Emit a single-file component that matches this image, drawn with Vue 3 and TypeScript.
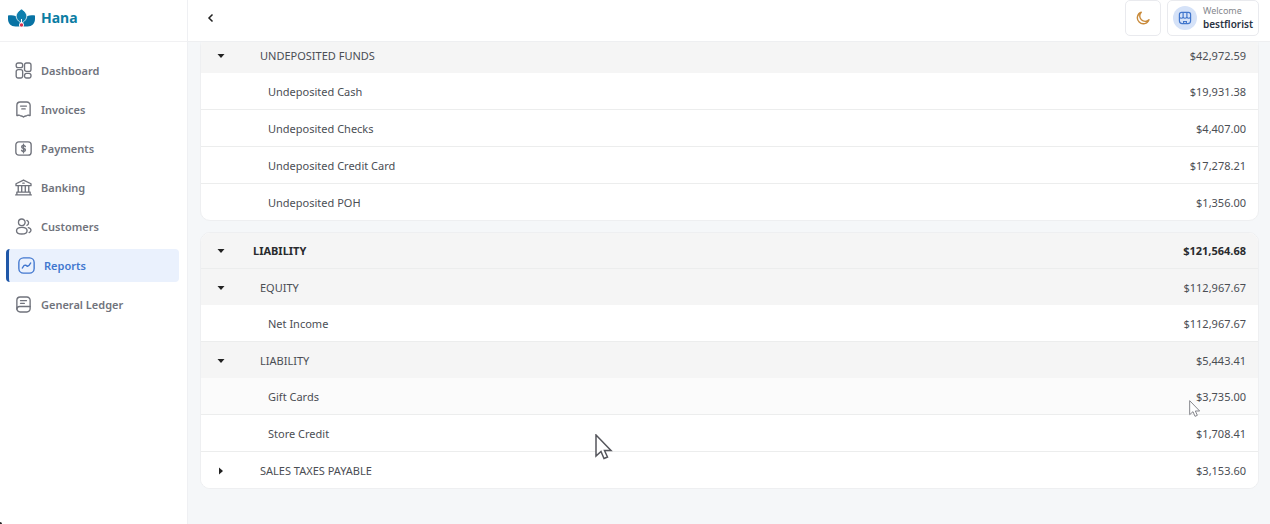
<script setup lang="ts">
type Level = 'section' | 'group' | 'leaf'
interface Row {
  level: Level
  name: string
  amount: string
  open?: boolean
  hover?: boolean
}
interface NavItem {
  label: string
  icon: string[]
  active?: boolean
}

const nav: NavItem[] = [
  {
    label: 'Dashboard',
    icon: [
      'M3.6 1.2h3.2a2.2 2.2 0 0 1 2.200 2.200v1a2.200 2.200 0 0 1-2.200 2.200H3.600a2.200 2.200 0 0 1-2.200-2.200v-1a2.200 2.200 0 0 1 2.200-2.200z',
      'M3.6 9h3.200a2.200 2.200 0 0 1 2.200 2.200v5.400a2.200 2.200 0 0 1-2.200 2.200H3.600a2.200 2.200 0 0 1-2.200-2.200v-5.400A2.200 2.200 0 0 1 3.600 9z',
      'M13.400 1.200h3.200a2.200 2.200 0 0 1 2.200 2.200v5.400a2.200 2.200 0 0 1-2.200 2.200h-3.200a2.200 2.200 0 0 1-2.200-2.200V3.400a2.200 2.200 0 0 1 2.200-2.200z',
      'M13.400 13.400h3.200a2.200 2.200 0 0 1 2.200 2.200v1a2.200 2.200 0 0 1-2.200 2.200h-3.200a2.200 2.200 0 0 1-2.200-2.200v-1a2.200 2.200 0 0 1 2.200-2.200z',
    ],
  },
  {
    label: 'Invoices',
    icon: [
      'M2.200 17V5A3.800 3.800 0 0 1 6 1.200h8A3.800 3.800 0 0 1 17.800 5v12c-1.800 0-2.600-1-3.800 0-1.300 1-2.300.2-4 2-1.700-1.800-2.700-1-4-2-1.200-1-2 0-3.800 0z',
      'M6.500 6h7M8 9.300h4',
    ],
  },
  {
    label: 'Payments',
    icon: [
      'M4.500 2.200h11a3.500 3.500 0 0 1 3.500 3.500v8.600a3.500 3.500 0 0 1-3.500 3.500h-11A3.500 3.500 0 0 1 1 14.300V5.700a3.500 3.500 0 0 1 3.500-3.500z',
      'M12.200 7.800c-.3-.9-1.200-1.300-2.200-1.300-1.300 0-2.200.6-2.200 1.700 0 2.400 4.500 1.200 4.500 3.600 0 1.100-1 1.700-2.300 1.700-1.200 0-2-.5-2.300-1.400M10 5v10',
    ],
  },
  {
    label: 'Banking',
    icon: [
      'M1.200 7.800V5.600L10 1.200l8.800 4.400v2.200z',
      'M3.800 8v7.500M7.900 8v7.500M12.100 8v7.500M16.200 8v7.500M2.500 15.500h15M.8 18.700h18.400M2.200 15.500v3M17.800 15.500v3M9.200 4.900h1.600',
    ],
  },
  {
    label: 'Customers',
    icon: [
      'M8 1.200a3.900 3.900 0 1 1 0 7.800 3.900 3.900 0 0 1 0-7.800z',
      'M8 11c3.600 0 6.200 1.500 6.200 3.900S11.600 18.800 8 18.800s-6.200-1.500-6.200-3.900S4.400 11 8 11z',
      'M14 2.800a3.100 3.100 0 0 1 0 5.800M15.700 11.300c1.900.5 3.100 1.600 3.100 3.100 0 1.300-.8 2.300-2.200 2.800',
    ],
  },
  {
    label: 'Reports',
    active: true,
    icon: [
      'M6.500 1h7A5.500 5.500 0 0 1 19 6.500v7a5.500 5.500 0 0 1-5.500 5.500h-7A5.500 5.500 0 0 1 1 13.500v-7A5.500 5.500 0 0 1 6.500 1z',
      'M5 13l2.200-3.200 1.800-.3 2 1.500 2-1.200L15 7',
    ],
  },
  {
    label: 'General Ledger',
    icon: [
      'M6 1.200h8A3.800 3.800 0 0 1 17.800 5v10a3.800 3.800 0 0 1-3.800 3.800H6A3.800 3.800 0 0 1 2.200 15V5A3.800 3.800 0 0 1 6 1.200z',
      'M2.200 15.500c0-2 1.300-3.200 3.300-3.200h12.300M6.500 5.500h7M6.500 8.600h4.500',
    ],
  },
]

const cards: Row[][] = [
  [
    { level: 'group', name: 'UNDEPOSITED FUNDS', amount: '$42,972.59', open: true },
    { level: 'leaf', name: 'Undeposited Cash', amount: '$19,931.38' },
    { level: 'leaf', name: 'Undeposited Checks', amount: '$4,407.00' },
    { level: 'leaf', name: 'Undeposited Credit Card', amount: '$17,278.21' },
    { level: 'leaf', name: 'Undeposited POH', amount: '$1,356.00' },
  ],
  [
    { level: 'section', name: 'LIABILITY', amount: '$121,564.68', open: true },
    { level: 'group', name: 'EQUITY', amount: '$112,967.67', open: true },
    { level: 'leaf', name: 'Net Income', amount: '$112,967.67' },
    { level: 'group', name: 'LIABILITY', amount: '$5,443.41', open: true },
    { level: 'leaf', name: 'Gift Cards', amount: '$3,735.00', hover: true },
    { level: 'leaf', name: 'Store Credit', amount: '$1,708.41' },
    { level: 'group', name: 'SALES TAXES PAYABLE', amount: '$3,153.60', open: false },
  ],
]
</script>

<template>
  <div class="app">
    <aside class="sidebar">
      <a class="brand" href="#">
        <svg class="logo" viewBox="0 0 54 36" aria-hidden="true">
          <path d="M0 13c9-2 17 0 21 6 3 4 4 9 4 16H15C6 35 0 29 0 20z" fill="#0873a4" />
          <path d="M54 13c-9-2-17 0-21 6-3 4-4 9-4 16h10c9 0 15-6 15-15z" fill="#0873a4" />
          <path d="M27 0C19 5 15 11 17 18c2 5 6 8 10 11 4-3 8-6 10-11 2-7-2-13-10-18z" fill="#0f7fae" stroke="#fff" stroke-width="1.500" />
          <path d="M27 20v9" stroke="#fff" stroke-width="2" />
          <circle cx="27" cy="32" r="5" fill="#fff" />
          <circle cx="27" cy="32" r="3.500" fill="#d9304f" />
        </svg>
        <span>Hana</span>
      </a>
      <nav class="nav">
        <a v-for="item in nav" :key="item.label" href="#" class="nav-item" :class="{ active: item.active }">
          <svg viewBox="0 0 20 20" class="nav-icon" aria-hidden="true">
            <path v-for="d in item.icon" :key="d" :d="d" />
          </svg>
          <span>{{ item.label }}</span>
        </a>
      </nav>
    </aside>

    <div class="page">
      <header class="topbar">
        <button class="back" aria-label="Collapse menu">
          <svg viewBox="0 0 10 10"><path d="M6.500 1.500L3 5l3.500 3.500" /></svg>
        </button>
        <div class="tools">
          <button class="theme" aria-label="Switch theme">
            <svg viewBox="0 0 20 20"><path d="M7.500 1.800A8.500 8.500 0 1 0 18.500 12.500 7 7 0 0 1 7.500 1.800z" /></svg>
          </button>
          <button class="user">
            <span class="avatar">
              <svg viewBox="0 0 20 20">
                <path d="M5 2h10a3 3 0 0 1 3 3v9a4 4 0 0 1-4 4H6a4 4 0 0 1-4-4V5a3 3 0 0 1 3-3z" />
                <path d="M2 8.500c1 2.500 4.300 2.500 5.300 0 1 2.500 4.400 2.500 5.400 0 1 2.500 4.300 2.500 5.300 0M7.300 8.500V2M12.700 8.500V2M8 18v-3h4v3" />
              </svg>
            </span>
            <span class="who"><small>Welcome</small><strong>bestflorist</strong></span>
          </button>
        </div>
      </header>

      <main class="content">
        <div class="scroll">
          <section v-for="(rows, c) in cards" :key="c" class="card">
            <table>
              <tbody>
                <tr v-for="(row, i) in rows" :key="i" :class="[row.level, { closed: row.open === false, hover: row.hover }]">
                  <td class="toggle">
                    <button v-if="row.level !== 'leaf'" :aria-expanded="row.open" :aria-label="row.name">
                      <svg viewBox="0 0 8 8"><path d="M0.500 2h7L4 6z" /></svg>
                    </button>
                  </td>
                  <td class="name">{{ row.name }}</td>
                  <td class="amount">{{ row.amount }}</td>
                </tr>
              </tbody>
            </table>
          </section>
        </div>
      </main>
    </div>

    <svg class="pointer large" viewBox="0 0 18 27" aria-hidden="true">
      <path d="M1 1v21l5-4.500 3 7 3.500-1.500-3-6.500H16z" />
    </svg>
    <svg class="pointer small" viewBox="0 0 18 27" aria-hidden="true">
      <path d="M1 1v21l5-4.500 3 7 3.500-1.500-3-6.500H16z" />
    </svg>
  </div>
</template>

<style>
body {
  margin: 0;
}
</style>

<style scoped>
.app {
  position: relative;
  display: flex;
  height: 100vh;
  overflow: hidden;
  background: #f5f7f9;
  color: #4b4e54;
  font: 11px/18px "Noto Sans", "Open Sans", sans-serif;
}
.app::after {
  content: "";
  position: absolute;
  bottom: 0;
  left: 0;
  width: 2px;
  height: 2px;
  border-top-right-radius: 2px;
  background: #222;
}
button {
  margin: 0;
  padding: 0;
  border: 0;
  background: none;
  color: inherit;
  font: inherit;
}
svg {
  display: block;
  flex: none;
}
.sidebar {
  flex: none;
  width: 187px;
  background: #fff;
  border-right: 1px solid #eff0f3;
}
.brand {
  display: flex;
  align-items: center;
  gap: 6px;
  box-sizing: border-box;
  height: 42px;
  padding: 0 8px 5px;
  border-bottom: 1px solid #f1f1f3;
  color: #0b7da3;
  font-size: 14px;
  font-weight: 700;
  text-decoration: none;
}
.logo {
  width: 27px;
  height: 18px;
}
.nav {
  display: flex;
  flex-direction: column;
  gap: 6px;
  padding: 12px 8px 0 6px;
}
.nav-item {
  display: flex;
  align-items: center;
  gap: 9px;
  height: 33px;
  padding-left: 9px;
  border-radius: 4px;
  color: #70737c;
  font-weight: 600;
  text-decoration: none;
}
.nav-item.active {
  border-left: 3px solid #1f57a8;
  background: #eaf1fd;
  color: #4177cf;
}
.nav-icon {
  width: 17px;
  height: 17px;
  fill: none;
  stroke: currentColor;
  stroke-width: 1.600;
  stroke-linejoin: round;
  stroke-linecap: round;
}
.page {
  display: flex;
  flex: 1;
  flex-direction: column;
  min-width: 0;
}
.topbar {
  display: flex;
  align-items: center;
  justify-content: space-between;
  box-sizing: border-box;
  height: 42px;
  padding: 0 11px 5px 18px;
  background: #fff;
  border-bottom: 1px solid #eeeff1;
}
.back svg {
  width: 10px;
  height: 10px;
  fill: none;
  stroke: #222;
  stroke-width: 1.500;
}
.tools {
  display: flex;
  gap: 6px;
}
.theme,
.user {
  display: flex;
  align-items: center;
  box-sizing: border-box;
  height: 36px;
  border: 1px solid #e9eaee;
  border-radius: 5px;
  background: #fff;
}
.theme {
  justify-content: center;
  width: 36px;
}
.theme svg {
  width: 14px;
  height: 14px;
  fill: none;
  stroke: #c98a3a;
  stroke-width: 2;
  stroke-linejoin: round;
}
.user {
  gap: 6px;
  padding: 0 5px;
}
.avatar {
  display: grid;
  place-items: center;
  width: 24px;
  height: 24px;
  border-radius: 50%;
  background: #d5e2f8;
}
.avatar svg {
  width: 14px;
  height: 14px;
  fill: none;
  stroke: #4176cc;
  stroke-width: 1.700;
}
.who {
  display: flex;
  flex-direction: column;
  text-align: left;
}
.who small {
  color: #85878d;
  font-size: 9px;
  line-height: 12px;
}
.who strong {
  color: #2a3342;
  font-size: 10px;
  font-weight: 600;
  line-height: 14px;
}
.content {
  flex: 1;
  min-height: 0;
  overflow: hidden;
}
.scroll {
  display: flex;
  flex-direction: column;
  gap: 11px;
  margin-top: -6px;
  padding: 0 11px 0 12px;
}
.card {
  overflow: hidden;
  border: 1px solid #eeeff1;
  border-radius: 10px;
  background: #fff;
}
table {
  width: 100%;
  border-collapse: separate;
  border-spacing: 0;
}
td {
  padding: 10px 0 8px;
  border-bottom: 1px solid #eceded;
}
.group td,
tr:last-child td {
  border-bottom: 0;
}
.section td,
.group td {
  background: #f5f5f5;
}
.section td {
  padding-top: 9px;
}
.closed td {
  background: #fff;
}
.hover td {
  background: #fbfbfb;
}
.toggle {
  width: 52px;
}
.toggle button {
  display: block;
  margin-left: 16px;
}
.toggle svg {
  width: 8px;
  height: 8px;
  fill: #222;
}
.closed .toggle svg {
  transform: rotate(-90deg);
}
.group .name {
  padding-left: 7px;
}
.leaf .name {
  padding-left: 15px;
}
.amount {
  padding-right: 12px;
  text-align: right;
}
.section {
  color: #292b2e;
  font-weight: 700;
}
.pointer {
  position: absolute;
  fill: #fff;
  stroke: #55565c;
  stroke-width: 1.500;
}
.large {
  top: 434px;
  left: 595px;
  width: 18px;
  height: 27px;
}
.small {
  top: 400px;
  left: 1189px;
  width: 12px;
  height: 18px;
  stroke: #85868c;
}
</style>
